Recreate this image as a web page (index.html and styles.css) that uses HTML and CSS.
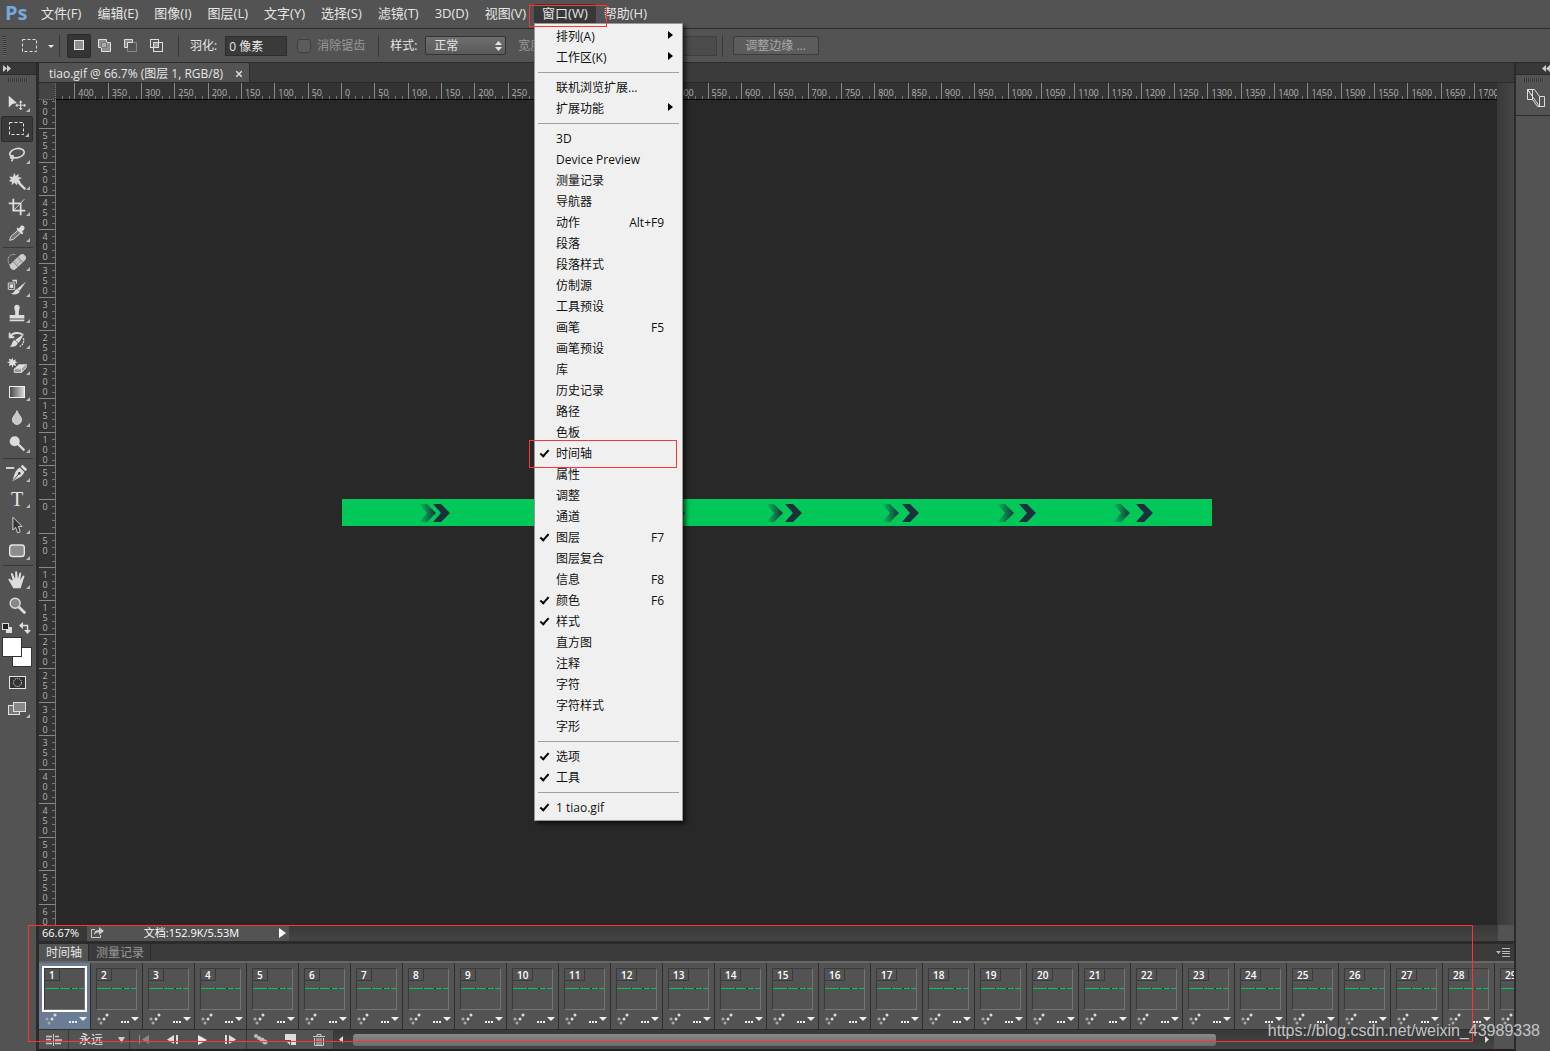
FILE: index.html
```html
<!DOCTYPE html>
<html lang="zh-CN">
<head>
    <meta charset="UTF-8">
    <meta name="viewport" content="width=device-width, initial-scale=1.0">
    <title>tiao.gif @ 66.7%</title>
    <link rel="stylesheet" href="styles.css">
</head>
<body>
    <nav class="menubar">
        <span class="logo">Ps</span>
        <button type="button">文件(F)</button>
        <button type="button">编辑(E)</button>
        <button type="button">图像(I)</button>
        <button type="button">图层(L)</button>
        <button type="button">文字(Y)</button>
        <button type="button">选择(S)</button>
        <button type="button">滤镜(T)</button>
        <button type="button">3D(D)</button>
        <button type="button">视图(V)</button>
        <div class="menu-open">
            <button type="button" class="current">窗口(W)</button>
            <ul class="dropdown">
                <li class="sub">排列(A)</li>
                <li class="sub">工作区(K)</li>
                <li class="line"></li>
                <li>联机浏览扩展...</li>
                <li class="sub">扩展功能</li>
                <li class="line"></li>
                <li>3D</li>
                <li>Device Preview</li>
                <li>测量记录</li>
                <li>导航器</li>
                <li>动作<kbd>Alt+F9</kbd></li>
                <li>段落</li>
                <li>段落样式</li>
                <li>仿制源</li>
                <li>工具预设</li>
                <li>画笔<kbd>F5</kbd></li>
                <li>画笔预设</li>
                <li>库</li>
                <li>历史记录</li>
                <li>路径</li>
                <li>色板</li>
                <li class="checked marked">时间轴</li>
                <li>属性</li>
                <li>调整</li>
                <li>通道</li>
                <li class="checked">图层<kbd>F7</kbd></li>
                <li>图层复合</li>
                <li>信息<kbd>F8</kbd></li>
                <li class="checked">颜色<kbd>F6</kbd></li>
                <li class="checked">样式</li>
                <li>直方图</li>
                <li>注释</li>
                <li>字符</li>
                <li>字符样式</li>
                <li>字形</li>
                <li class="line"></li>
                <li class="checked">选项</li>
                <li class="checked">工具</li>
                <li class="line"></li>
                <li class="checked">1 tiao.gif</li>
            </ul>
            <div class="mark mark-menu"></div>
        </div>
        <button type="button">帮助(H)</button>
    </nav>

    <div class="options">
        <span class="grip"></span>
        <button type="button" class="preset" aria-label="工具预设">
            <svg width="34" height="20" viewBox="0 0 34 20"><rect x="2.500" y="3.500" width="14" height="12" fill="none" stroke="#e0e0e0" stroke-dasharray="3 2"/><path d="M28 9h6l-3 3z" fill="#e8e8e8"/></svg>
        </button>
        <span class="sep"></span>
        <div class="modes">
            <button type="button" class="on" aria-label="新选区"><svg width="16" height="16"><rect x="3.500" y="2.500" width="9" height="9" fill="#8f8f8f" stroke="#e6e6e6"/></svg></button>
            <button type="button" aria-label="添加到选区"><svg width="16" height="16"><path d="M1.500 1.500h8v3h4v9h-9v-4h-3z" fill="#8f8f8f" stroke="#e0e0e0"/><path d="M4.500 9.500v-5h5v5z" fill="#aaa" stroke="#777"/></svg></button>
            <button type="button" aria-label="从选区减去"><svg width="16" height="16"><path d="M4.500 13.500h9v-9h-9z" fill="#555" stroke="#888"/><path d="M9.500 4.500v-3h-8v8h3v-5z" fill="#888" stroke="#e0e0e0"/></svg></button>
            <button type="button" aria-label="与选区交叉"><svg width="16" height="16" fill="none" stroke="#e0e0e0"><rect x="1.500" y="1.500" width="8" height="8"/><rect x="4.500" y="4.500" width="9" height="9"/><path d="M5 5h4v4H5z" fill="#999" stroke="none"/></svg></button>
        </div>
        <span class="sep"></span>
        <label for="feather">羽化:</label>
        <input type="text" id="feather" value="0 像素">
        <label class="disabled alias"><input type="checkbox" disabled>消除锯齿</label>
        <span class="sep"></span>
        <label for="mode">样式:</label>
        <div class="select-box">
            <select id="mode"><option>正常</option></select>
            <svg width="7" height="10"><path d="M0 4l3.500-4L7 4zM0 6h7l-3.500 4z" fill="#e6e6e6"/></svg>
        </div>
        <label class="disabled" for="width">宽度:</label>
        <input type="text" id="width" disabled>
        <label class="disabled" for="height">高度:</label>
        <input type="text" id="height" disabled>
        <span class="sep"></span>
        <button type="button" class="refine" disabled>调整边缘 ...</button>
    </div>

    <div class="workspace">
        <aside class="tools">
            <div class="dock-head"><svg width="8" height="7"><path d="M0 0l4 3.500L0 7zM4 0l4 3.500L4 7z" fill="#ccc"/></svg></div>
            <div class="dock-grip"></div>
            <button type="button" aria-label="移动"><svg viewBox="0 0 24 24"><path d="M3 4v13l4-4 5-1z" fill="#ddd"/><path d="M16 10v9M11.500 14.500h9" stroke="#ddd" stroke-width="1.200"/><path d="M14 11.500l2-2.500 2 2.500zM14 17.500l2 2.500 2-2.500zM12.500 12.500l-2.500 2 2.500 2zM19.500 12.500l2.500 2-2.500 2z" fill="#ddd"/></svg></button>
            <button type="button" class="active" aria-label="选框"><svg viewBox="0 0 22 22"><rect x="3.500" y="4.500" width="14" height="12" fill="none" stroke="#e8e8e8" stroke-dasharray="3 2"/></svg></button>
            <button type="button" aria-label="套索"><svg viewBox="0 0 24 24" fill="none" stroke="#d8d8d8" stroke-width="1.800"><ellipse cx="12" cy="10" rx="8" ry="5" transform="rotate(-12 12 10)"/><circle cx="6.500" cy="14" r="1.500"/><path d="M7 15.500c1 1 0 2-1 3.500"/></svg></button>
            <button type="button" aria-label="魔棒"><svg viewBox="0 0 24 24"><path d="M9 3l1.500 3.500L14 4l-.5 4 4 .5-3.500 2 2.500 3-4-.5-.5 3.500-3-2.500L6 16.500l.5-3.500L3 12l2.500-2L3.500 7l4 .500z" fill="#d8d8d8"/><path d="M13 13l8 8" stroke="#ddd" stroke-width="2.500"/></svg></button>
            <button type="button" aria-label="裁剪"><svg viewBox="0 0 24 24" fill="none" stroke="#ddd" stroke-width="2"><path d="M8 3v13h13M3 8h13v13"/><path d="M8.500 15.500L20 3.500" stroke-width="1"/></svg></button>
            <button type="button" aria-label="吸管"><svg viewBox="0 0 24 24"><path d="M13 9l3 3-8 7-4 1 1-4z" fill="#777" stroke="#e0e0e0"/><path d="M11.500 7.500l6 6 1.500-1.500-1.500-1.500L20 8c1-2-1-5-3.500-4L14 7l-1.500-1z" fill="#ddd"/></svg></button>
            <hr>
            <button type="button" aria-label="修复画笔"><svg viewBox="0 0 24 24"><path d="M10 4c-8-2-10 8-5 12" fill="none" stroke="#e0e0e0" stroke-dasharray="1 1"/><g transform="rotate(-43 13 12)"><rect x="2.500" y="8" width="21" height="8" rx="4" fill="#ccc"/><path d="M9.500 8v8M16.500 8v8" stroke="#777"/><path d="M11 10h1v1h-1zM14 10h1v1h-1zM11 13h1v1h-1zM14 13h1v1h-1z" fill="#444"/></g></svg></button>
            <button type="button" aria-label="画笔"><svg viewBox="0 0 24 24"><path d="M2.500 6.500h7v7h-7z" fill="none" stroke="#ddd"/><path d="M4 8h4v4H4zM7 3h5v4h-1V5H7z" fill="#ddd"/><path d="M22 5l-7 10-3-2zM12 13l3 3c-2 3-6 4-10 2 4 0 4-4 7-5z" fill="#ddd"/></svg></button>
            <button type="button" aria-label="仿制图章"><svg viewBox="0 0 24 24" fill="#ddd"><path d="M12 2c4 0 3 5 2 7v4h6v4H4v-4h6V9C9 7 8 2 12 2zM4 18h16v2H4z"/></svg></button>
            <button type="button" aria-label="历史记录画笔"><svg viewBox="0 0 24 24"><path d="M4 4v5h5M5 8c3-5 10-4 13-2" fill="none" stroke="#ddd" stroke-width="2"/><path d="M20 5l-6 10-4-3zM9 12l4 3c-1 4-5 5-9 4 3-1 2-5 5-7z" fill="#ddd"/><path d="M19 10c1 4-1 8-4 9" fill="none" stroke="#ddd" stroke-width="1.500" stroke-dasharray="2 1"/></svg></button>
            <button type="button" aria-label="橡皮擦"><svg viewBox="0 0 24 24"><path d="M7 3l1 3 3-1.500L10 7l3 1-3 1 1 3-3-1-1 3-1-3-3 1 1-3-3-1 3-1-1-3 3 1z" fill="#ddd"/><path d="M14 10h8l-5 5H9z" fill="#ddd"/><path d="M9 15h8v4H9zM17 15l5-5v4l-5 5z" fill="#999" stroke="#ddd"/></svg></button>
            <button type="button" aria-label="渐变"><svg viewBox="0 0 22 22"><defs><linearGradient id="grad"><stop offset="0" stop-color="#444"/><stop offset="1" stop-color="#ddd"/></linearGradient></defs><rect x="3.500" y="5.500" width="15" height="11" fill="url(#grad)" stroke="#eee"/></svg></button>
            <button type="button" aria-label="模糊"><svg viewBox="0 0 24 24"><path d="M12 4c1 4 5 6 5 10a5 5 0 0 1-10 0c0-4 4-6 5-10z" fill="#c8c8c8" stroke="#ddd"/></svg></button>
            <button type="button" aria-label="减淡"><svg viewBox="0 0 24 24"><circle cx="9.500" cy="9" r="5.500" fill="#ddd"/><path d="M13 12l7 7" stroke="#ddd" stroke-width="2.500"/></svg></button>
            <hr>
            <button type="button" aria-label="钢笔"><svg viewBox="0 0 24 24"><path d="M0 6.500h9" stroke="#ddd" stroke-width="2"/><path d="M18 3l5 5-2 2-5-5zM15 6l5 5c-2 5-5 6-13 10 2-7 3-12 8-15z" fill="#ddd"/><path d="M8 20l6-7" stroke="#444"/><circle cx="14.500" cy="12.500" r="1.500" fill="#444"/></svg></button>
            <button type="button" class="type" aria-label="文字">T</button>
            <button type="button" aria-label="路径选择"><svg viewBox="0 0 24 24"><path d="M7.500 3.500v14l3-3 2 6 3-1-2-6h4z" fill="#333" stroke="#ddd"/></svg></button>
            <button type="button" aria-label="圆角矩形"><svg viewBox="0 0 24 24"><rect x="4" y="5.500" width="16" height="12.500" rx="3" fill="#8c8c8c" stroke="#e6e6e6" stroke-width="1.500"/></svg></button>
            <hr>
            <button type="button" aria-label="抓手"><svg viewBox="0 0 24 24"><path d="M8 21l-4.500-8c-2-2 0-3 1-2l3 2-2-7c-.5-2 1.500-2 2-.5L10 11V4c0-2 2-2 2.200 0l.8 7 1.500-6c.500-2 2.300-1.500 2 .5L15.500 12l2.500-4c1-1.500 2.500-1 2 .500L17.500 16 16 21z" fill="#ddd"/></svg></button>
            <button type="button" class="plain" aria-label="缩放"><svg viewBox="0 0 24 24"><circle cx="10" cy="9" r="5.500" fill="#888" stroke="#ddd" stroke-width="1.500"/><path d="M14 13l7 7" stroke="#ddd" stroke-width="3"/></svg></button>
            <div class="swap">
                <svg width="10" height="10"><path d="M4 4h6v6H4z" fill="#ddd"/><rect x=".5" y=".5" width="6" height="6" fill="#222" stroke="#ddd"/></svg>
                <svg width="12" height="12"><path d="M3 3.500h5.500V9" fill="none" stroke="#ddd" stroke-width="1.500"/><path d="M4 0v7L0 3.500zM5 8h7l-3.500 4z" fill="#ddd"/></svg>
            </div>
            <div class="colors"><span class="back"></span><span class="front"></span></div>
            <button type="button" class="plain" aria-label="快速蒙版"><svg viewBox="0 0 22 22"><rect x="3.500" y="4.500" width="16" height="12" fill="#333" stroke="#e6e6e6"/><circle cx="11.500" cy="10.500" r="4" fill="none" stroke="#fff" stroke-dasharray="1 1"/></svg></button>
            <button type="button" aria-label="屏幕模式"><svg viewBox="0 0 22 22" stroke="#e0e0e0"><rect x="2.500" y="7.500" width="11" height="9" fill="#777"/><rect x="7.500" y="4.500" width="12" height="9" fill="#888"/></svg></button>
        </aside>

        <main class="document">
            <div class="tabs">
                <div class="tab">tiao.gif @ 66.7% (图层 1, RGB/8) <button type="button" aria-label="关闭"><svg width="6" height="6"><path d="M0 0l6 6M6 0L0 6" stroke="#ddd" stroke-width="1.500"/></svg></button></div>
            </div>
            <div class="view">
                <div class="corner"></div>
                <div class="ruler-x" id="rulerX"></div>
                <div class="scroll-y"></div>
                <div class="ruler-y" id="rulerY"></div>
                <div class="canvas">
                    <svg class="strip" width="870" height="27" viewBox="0 0 870 27">
                        <defs>
                            <linearGradient id="fade"><stop offset="0" stop-color="#1c2f3d" stop-opacity="0"/><stop offset="1" stop-color="#1c2f3d"/></linearGradient>
                            <path id="chev" d="M0 0h8l9 9-9 9H0l8-9z"/>
                        </defs>
                        <rect width="870" height="27" fill="#02c859"/>
                        <g fill="url(#fade)">
                            <use href="#chev" x="77" y="5"/><use href="#chev" x="193" y="5"/><use href="#chev" x="309" y="5"/><use href="#chev" x="424" y="5"/><use href="#chev" x="540" y="5"/><use href="#chev" x="655" y="5"/><use href="#chev" x="771" y="5"/>
                        </g>
                        <g fill="#1c2f3d">
                            <use href="#chev" x="91" y="5"/><use href="#chev" x="209" y="5"/><use href="#chev" x="326" y="5"/><use href="#chev" x="443" y="5"/><use href="#chev" x="560" y="5"/><use href="#chev" x="677" y="5"/><use href="#chev" x="794" y="5"/>
                        </g>
                    </svg>
                </div>
            </div>

            <div class="bottom">
                <div class="status">
                    <span class="zoom">66.67%</span>
                    <div class="info">
                        <svg width="14" height="12"><path d="M5 2.500H1.500v8h9V8" fill="none" stroke="#ccc"/><path d="M4 8c0-4 2-5 5-5V0l5 4-5 4V5.500C7 5.500 5 6 4 8z" fill="#ccc"/></svg>
                        <span>文档:152.9K/5.53M</span>
                        <svg width="7" height="10"><path d="M0 0l7 5-7 5z" fill="#fff"/></svg>
                    </div>
                    <span class="track"></span>
                    <span class="size-box"></span>
                </div>
                <div class="panel-tabs">
                    <button type="button" class="current">时间轴</button>
                    <button type="button">测量记录</button>
                    <svg width="14" height="9"><path d="M0 3h5L2.500 6z" fill="#bbb"/><path d="M6 .5h8M6 3.500h8M6 5.500h8M6 8.500h8" stroke="#bbb"/></svg>
                </div>
                <div class="frames" id="frames"></div>
                <div class="controls">
                    <button type="button" class="convert" aria-label="转换为视频时间轴"><svg width="16" height="12" stroke="#ccc" fill="none"><path d="M0 2.500h6M0 5.500h5M0 9.500h6M9 2.500h4M9 6h7M9 9.500h6" stroke-width="1.500"/><path d="M7.500 0v12"/></svg></button>
                    <div class="loop">
                        <select aria-label="循环"><option>永远</option></select>
                        <svg width="7" height="6"><path d="M0 0h7L3.500 6z" fill="#ccc"/></svg>
                    </div>
                    <div class="play">
                        <button type="button" aria-label="第一帧" disabled><svg width="12" height="9" fill="#888"><path d="M1 0h1v9H1zM11 0v9L4 4.500z"/></svg></button>
                        <button type="button" aria-label="上一帧"><svg width="12" height="9" fill="#ddd"><path d="M7 0v9L0 4.500zM9 0h2v9H9z"/></svg></button>
                        <button type="button" aria-label="播放"><svg width="12" height="10" fill="#eee"><path d="M2 0l9 5-9 5z"/></svg></button>
                        <button type="button" aria-label="下一帧"><svg width="12" height="9" fill="#ddd"><path d="M0 0h2v9H0zM4 0l7 4.500L4 9z"/></svg></button>
                    </div>
                    <div class="edit">
                        <button type="button" aria-label="过渡"><svg width="14" height="12" fill="#bbb"><circle cx="2" cy="2" r="2"/><circle cx="5" cy="4" r="2"/><circle cx="8" cy="6" r="2.500"/><circle cx="11" cy="8" r="2.500"/></svg></button>
                        <button type="button" aria-label="复制帧"><svg width="11" height="11" fill="#ddd"><path d="M0 0h11v11H6V6H0z"/><path d="M1 7h4v4z"/></svg></button>
                        <button type="button" aria-label="删除帧"><svg width="12" height="12" fill="none" stroke="#ccc"><path d="M0 2.500h12M4 2V.5h4V2M1.500 4v7.500h9V4M4 4v7M6 4v7M8 4v7"/></svg></button>
                    </div>
                    <div class="scroll-x">
                        <svg width="4" height="7"><path d="M4 0v7L0 3.500z" fill="#ddd"/></svg>
                        <span class="thumb"></span>
                        <svg width="4" height="7"><path d="M0 0l4 3.500L0 7z" fill="#ddd"/></svg>
                    </div>
                </div>
                <div class="mark mark-bottom"></div>
            </div>
        </main>

        <aside class="dock">
            <div class="dock-head"><svg width="8" height="7"><path d="M4 0v7L0 3.500zM8 0v7L4 3.500z" fill="#ccc"/></svg></div>
            <div class="dock-grip"></div>
            <button type="button" aria-label="属性"><svg width="20" height="20" fill="none" stroke="#ddd"><path d="M1.500 1.500v10h5v-10zM1.500 1.500h7l5 7M6.500 11.500l5 7h7M13.500 8.500h5v10h-5zM1.500 1.500l12 17M1.500 1.500l5 7"/></svg></button>
        </aside>
    </div>
    <div class="watermark">https://blog.csdn.net/weixin_43989338</div>

    <script src="main.js"></script>
</body>
</html>
```
FILE: styles.css
```css
*, *::before, *::after {
    box-sizing: border-box;
}
body {
    margin: 0;
    height: 100vh;
    display: flex;
    flex-direction: column;
    overflow: hidden;
    position: relative;
    background-color: #535353;
    color: #e6e6e6;
    font: 12px/16px "Open Sans", "Noto Sans CJK SC", sans-serif;
}
button, input, select {
    font: inherit;
    color: inherit;
    margin: 0;
    padding: 0;
    border: none;
    background: none;
}
svg {
    display: block;
    flex: none;
}

/* 菜单栏 */
.menubar {
    flex: none;
    display: flex;
    align-items: center;
    height: 29px;
    padding-bottom: 2px;
    border-bottom: 1px solid #2b2b2b;
    white-space: nowrap;
    font-size: 13px;
}
.menubar button {
    padding: 0 8px;
    height: 19px;
    line-height: 19px;
}
.logo {
    width: 28px;
    margin-left: 5px;
    color: #76a9dc;
    font-size: 20px;
    font-weight: bold;
    line-height: 24px;
}
.menu-open {
    position: relative;
}
.menubar .current {
    display: block;
    background-color: #383838;
    border-radius: 2px;
}
.dropdown {
    position: absolute;
    z-index: 5;
    top: 19px;
    left: 0;
    width: 149px;
    margin: 0;
    padding: 2px 0;
    list-style: none;
    font-size: 12px;
    color: #111;
    background-color: #f0f0f0;
    border: 1px solid #999;
    box-shadow: 3px 3px 4px rgba(0, 0, 0, 0.6);
}
.dropdown li {
    position: relative;
    display: flex;
    justify-content: space-between;
    height: 21px;
    line-height: 21px;
    padding: 0 18px 0 21px;
}
.dropdown kbd {
    font: inherit;
}
.dropdown .line {
    height: 1px;
    margin: 4px 3px;
    background-color: #a0a0a0;
}
.dropdown .sub::after {
    content: "";
    position: absolute;
    right: 9px;
    top: 5px;
    border: 4px solid transparent;
    border-left: 5px solid #000;
    border-right: none;
}
.dropdown .checked::before {
    content: "";
    position: absolute;
    left: 5px;
    top: 7px;
    width: 9px;
    height: 5px;
    border-left: 2px solid #000;
    border-bottom: 2px solid #000;
    transform: rotate(-48deg);
}
.dropdown .marked::after {
    content: "";
    position: absolute;
    left: -6px;
    right: 5px;
    top: -3px;
    height: 28px;
    border: 1px solid #f33;
}
.mark {
    position: absolute;
    z-index: 6;
    border: 1px solid #f33;
    pointer-events: none;
}
.mark-menu {
    left: -5px;
    right: -11px;
    top: 1px;
    height: 22px;
}
.mark-bottom {
    left: -11px;
    right: 41px;
    top: 0;
    bottom: 7px;
}

/* 选项栏 */
.options {
    flex: none;
    display: flex;
    align-items: center;
    height: 34px;
    border-bottom: 1px solid #2b2b2b;
    white-space: nowrap;
}
.grip {
    width: 3px;
    height: 20px;
    margin: 0 14px 0 3px;
    background: repeating-linear-gradient(#333 0 1px, #666 1px 2px);
}
.sep {
    width: 1px;
    height: 22px;
    margin: 0 7px 0 5px;
    background-color: #383838;
}
.modes {
    display: flex;
    gap: 2px;
    margin-right: 4px;
}
.modes button {
    display: flex;
    align-items: center;
    justify-content: center;
    width: 24px;
    height: 24px;
}
.modes .on {
    background-color: #353535;
    border: 1px solid #2a2a2a;
    border-radius: 2px;
}
.options label {
    margin: 0 8px 0 4px;
}
.options input[type="text"] {
    width: 62px;
    height: 20px;
    padding: 0 3px;
    background-color: #3a3a3a;
    border: 1px solid #2d2d2d;
}
.options input[type="text"]:disabled {
    width: 58px;
    background-color: #4b4b4b;
    border-color: #404040;
}
.options .disabled {
    color: #999;
    margin-left: 12px;
}
.options .alias {
    display: flex;
    align-items: center;
    margin-left: 10px;
}
.alias input {
    appearance: none;
    width: 14px;
    height: 14px;
    margin-right: 6px;
    background-color: #5c5c5c;
    border: 1px solid #404040;
    border-radius: 3px;
}
.select-box {
    position: relative;
}
.select-box select {
    appearance: none;
    display: block;
    width: 81px;
    height: 19px;
    padding-left: 8px;
    background: linear-gradient(#6e6e6e, #5a5a5a);
    border: 1px solid #333;
    border-radius: 2px;
}
.select-box svg {
    position: absolute;
    right: 4px;
    top: 5px;
    pointer-events: none;
}
.refine {
    width: 86px;
    height: 19px;
    line-height: 17px;
    margin-left: 3px;
    color: #aaa;
    background-color: #5c5c5c;
    border: 1px solid #3c3c3c;
    border-radius: 2px;
}

/* 工作区 */
.workspace {
    flex: 1;
    display: flex;
    min-height: 0;
    background-color: #2b2b2b;
}
.tools {
    flex: none;
    width: 36px;
    margin-right: 3px;
    background-color: #535353;
}
.dock-head {
    display: flex;
    align-items: center;
    height: 12px;
    padding-left: 3px;
    background-color: #383838;
    border-bottom: 1px solid #2b2b2b;
}
.dock-grip {
    width: 20px;
    height: 4px;
    margin: 3px 8px 8px;
    background: repeating-linear-gradient(90deg, #333 0 1px, #606060 1px 2px);
}
.tools button {
    position: relative;
    display: flex;
    justify-content: center;
    align-items: center;
    width: 32px;
    height: 26px;
    margin-left: 1px;
}
.tools button svg {
    width: 22px;
    height: 22px;
}
.tools button::after {
    content: "";
    position: absolute;
    right: 3px;
    bottom: 4px;
    border: 2px solid transparent;
    border-right-color: #bbb;
    border-bottom-color: #bbb;
}
.tools .plain::after {
    display: none;
}
.tools .active {
    background-color: #393939;
    border: 1px solid #2b2b2b;
    border-radius: 2px;
}
.tools .type {
    font: 20px/24px "Liberation Serif", serif;
}
.tools hr {
    margin: 1px 3px;
    border: none;
    height: 1px;
    background-color: #383838;
}
.swap {
    display: flex;
    justify-content: space-between;
    align-items: center;
    height: 17px;
    padding: 0 5px 0 2px;
}
.colors {
    position: relative;
    height: 32px;
    margin: 1px 0;
}
.colors span {
    position: absolute;
    width: 20px;
    height: 20px;
    background-color: #fff;
    border: 1px solid #333;
}
.front {
    left: 2px;
    top: 0;
}
.back {
    left: 12px;
    top: 10px;
}

/* 文档窗口 */
.document {
    flex: 1;
    min-width: 0;
    display: flex;
    flex-direction: column;
}
.tabs {
    flex: none;
    display: flex;
    height: 20px;
    background-color: #3b3b3b;
    border-bottom: 1px solid #2b2b2b;
}
.tab {
    display: flex;
    align-items: center;
    gap: 13px;
    padding: 2px 7px 0 10px;
    background-color: #535353;
    border-right: 1px solid #2b2b2b;
    white-space: nowrap;
}
.view {
    flex: 1;
    min-height: 0;
    display: grid;
    grid-template-columns: 17px minmax(0, 1fr) 17px;
    grid-template-rows: 17px minmax(0, 1fr);
}
.corner {
    background-color: #444;
    border-right: 1px dotted #777;
    border-bottom: 1px dotted #777;
}
.ruler-x, .ruler-y {
    display: flex;
    overflow: hidden;
    background-color: #333;
    color: #b4b4b4;
    font-size: 9px;
    line-height: 10px;
}
.ruler-x {
    border-bottom: 1px solid #000;
}
.ruler-x span {
    flex: none;
    padding: 5px 0 0 3px;
    border-left: 1px solid #888;
    background: repeating-linear-gradient(90deg, transparent 0 6px, #777 6px 7px) bottom / 100% 3px no-repeat;
}
.ruler-x span:first-child {
    margin-left: -15px;
}
.ruler-y {
    grid-column: 1;
    grid-row: 2;
    flex-direction: column;
    border-right: 1px solid #777;
}
.ruler-y span {
    flex: none;
    width: 16px;
    padding: 2px 7px 0 3px;
    overflow-wrap: anywhere;
    text-align: center;
    border-top: 1px solid #888;
    background: repeating-linear-gradient(transparent 0 6px, #777 6px 7px) right / 3px 100% no-repeat;
}
.ruler-y span:first-child {
    margin-top: -6px;
}
.scroll-y {
    grid-column: 3;
    grid-row: 1 / 3;
    background: linear-gradient(90deg, #393939, #464646);
}
.canvas {
    grid-column: 2;
    grid-row: 2;
    display: flex;
    align-items: center;
    justify-content: center;
    overflow: hidden;
    background-color: #282828;
}

/* 状态栏和时间轴 */
.bottom {
    position: relative;
    flex: none;
    border-bottom: 2px solid #221e22;
}
.status {
    display: flex;
    height: 16px;
    line-height: 16px;
    color: #fff;
    font-size: 11px;
    margin-bottom: 3px;
}
.zoom {
    width: 48px;
    padding-left: 3px;
    background-color: #383838;
}
.info {
    display: flex;
    align-items: center;
    justify-content: space-between;
    width: 202px;
    padding: 0 3px;
    background-color: #535353;
}
.track {
    flex: 1;
    background: linear-gradient(#393939, #454545);
}
.size-box {
    width: 16px;
    background-color: #535353;
}
.panel-tabs {
    display: flex;
    align-items: center;
    height: 19px;
    background-color: #3b3b3b;
    border-bottom: 2px solid #666;
}
.panel-tabs button {
    height: 17px;
    line-height: 17px;
    padding: 0 6px 0 7px;
    color: #999;
    border-right: 1px solid #2b2b2b;
}
.panel-tabs .current {
    color: #e6e6e6;
    background-color: #535353;
}
.panel-tabs svg {
    margin: 0 4px 0 auto;
}
.frames {
    display: flex;
    height: 66px;
    overflow: hidden;
    background-color: #535353;
}
.frame {
    flex: none;
    width: 52px;
    padding: 5px 5px 0 5px;
    border-right: 1px solid #2f2f2f;
}
.frame .pic {
    position: relative;
    height: 42px;
    border: 1px solid #757575;
    border-top-color: #3a3a3a;
    border-left-color: #3a3a3a;
}
/* 缩略图里的绿色条 */
.frame .pic::after {
    content: "";
    position: absolute;
    left: 0;
    right: 0;
    top: 19px;
    height: 1px;
    background: linear-gradient(90deg, #02c859 0 14px, #234 14px 15px, #02c859 15px 25px, #234 25px 27px, #02c859 27px 33px, #234 33px 34px, #02c859 34px);
}
.frame .num {
    display: inline-block;
    vertical-align: top;
    min-width: 13px;
    height: 12px;
    padding: 0 4px;
    color: #fff;
    font-size: 10px;
    font-weight: 600;
    line-height: 12px;
    border-right: 1px solid #3a3a3a;
    border-bottom: 1px solid #3a3a3a;
}
.frame.selected {
    background-color: #6b7d95;
}
.frame.selected .pic {
    background-color: #535353;
    outline: 2px solid #fff;
}
.frame .delay {
    display: flex;
    justify-content: space-between;
    align-items: center;
    height: 18px;
    margin-right: -2px;
}
.controls {
    display: flex;
    height: 20px;
    border-top: 1px solid #2f2f2f;
    background-color: #535353;
}
.controls > * {
    flex: none;
    display: flex;
    align-items: center;
    border-right: 1px solid #383838;
}
.convert {
    justify-content: center;
    width: 30px;
}
.loop {
    position: relative;
    width: 61px;
}
.loop select {
    appearance: none;
    width: 100%;
    padding-left: 10px;
}
.loop svg {
    position: absolute;
    right: 4px;
    top: 7px;
    pointer-events: none;
}
.play {
    width: 117px;
    justify-content: space-between;
    padding: 0 9px 0 8px;
}
.edit {
    width: 87px;
    justify-content: space-between;
    padding: 0 8px 0 7px;
}
.controls .scroll-x {
    flex: 1;
    gap: 10px;
    padding: 0 5px;
    margin-right: 20px;
    border-right: none;
    background: linear-gradient(#393939, #454545);
}
.thumb {
    width: 75%;
    height: 12px;
    margin-right: auto;
    background: linear-gradient(#8a8a8a, #6b6b6b);
    border-radius: 3px;
}

/* 右侧面板 */
.dock {
    flex: none;
    width: 34px;
    margin-left: 2px;
    background-color: #535353;
}
.dock .dock-head {
    justify-content: flex-end;
    padding: 0;
}
.dock .dock-grip {
    margin-bottom: 0;
}
.dock button {
    display: flex;
    justify-content: flex-end;
    width: 100%;
    height: 34px;
    padding: 6px 4px 0 0;
    border-bottom: 1px solid #2b2b2b;
}
.watermark {
    position: absolute;
    right: 10px;
    bottom: 10px;
    z-index: 7;
    color: #c4c4c4;
    font: 16px/20px "Liberation Sans", Arial, sans-serif;
}
```
FILE: main.js
```js
const rulerX = document.getElementById('rulerX');
const rulerY = document.getElementById('rulerY');
const frames = document.getElementById('frames');

// 每 50 像素一个大刻度
const stepX = 100 / 3;
const stepY = 135 / 4;

for (let v = -450; v <= 1700; v += 50) {
    const cell = document.createElement('span');
    // 最左边的刻度只露出一半，不写数字
    cell.textContent = v === -450 ? '' : Math.abs(v);
    cell.style.width = `${stepX}px`;
    rulerX.appendChild(cell);
}

for (let v = -600; v <= 600; v += 50) {
    const cell = document.createElement('span');
    cell.textContent = Math.abs(v);
    cell.style.height = `${stepY}px`;
    rulerY.appendChild(cell);
}

for (let i = 1; i <= 29; i++) {
    const frame = document.createElement('div');
    frame.className = i === 1 ? 'frame selected' : 'frame';
    frame.innerHTML = `
        <div class="pic"><span class="num">${i}</span></div>
        <div class="delay">
            <svg width="14" height="12"><g fill="#aaa"><circle cx="3" cy="6" r="1.500"/><circle cx="5" cy="10" r="1.500"/></g><g fill="#ddd"><circle cx="8" cy="6" r="1.500"/><circle cx="11" cy="2" r="1.500"/></g></svg>
            <svg width="18" height="8" fill="#eee"><path d="M0 6h2v2H0zM3 6h2v2H3zM6 6h2v2H6zM10 2h8l-4 4z"/></svg>
        </div>`;
    frames.appendChild(frame);
}
```
